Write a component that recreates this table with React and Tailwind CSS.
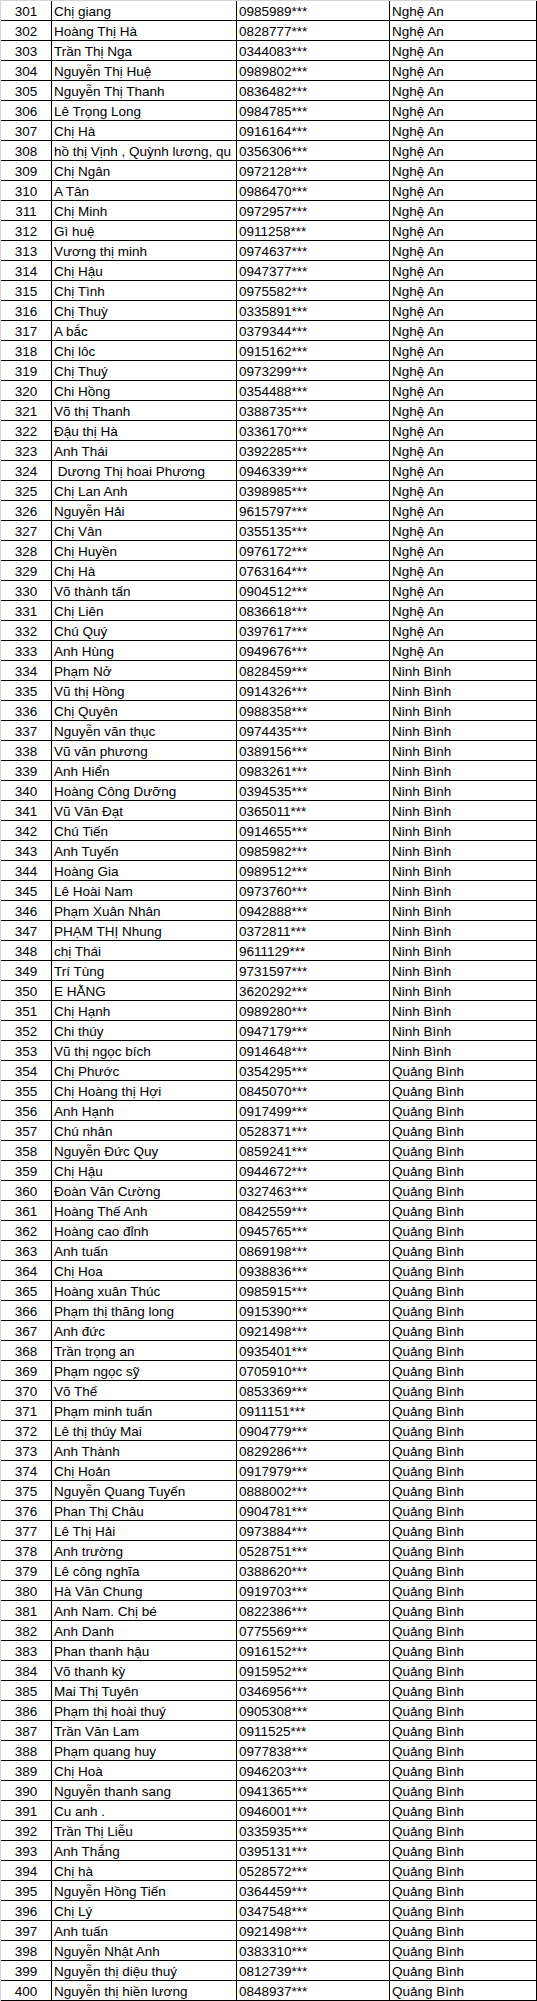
import React from "react";

const raw = `Chị giang|0985989|A
Hoàng Thị Hà|0828777|A
Trần Thị Nga|0344083|A
Nguyễn Thị Huệ|0989802|A
Nguyễn Thị Thanh|0836482|A
Lê Trọng Long|0984785|A
Chị Hà|0916164|A
hồ thị Vịnh , Quỳnh lương, qu|0356306|A
Chị Ngân|0972128|A
A Tân|0986470|A
Chị Minh|0972957|A
Gì huệ|0911258|A
Vương thị minh|0974637|A
Chị Hậu|0947377|A
Chị Tình|0975582|A
Chị Thuỳ|0335891|A
A bắc|0379344|A
Chị lôc|0915162|A
Chị Thuý|0973299|A
Chi Hồng|0354488|A
Võ thị Thanh|0388735|A
Đậu thị Hà|0336170|A
Anh Thái|0392285|A
 Dương Thị hoai Phương|0946339|A
Chị Lan Anh|0398985|A
Nguyễn Hải|9615797|A
Chị Vân|0355135|A
Chị Huyền|0976172|A
Chị Hà|0763164|A
Võ thành tấn|0904512|A
Chị Liên|0836618|A
Chú Quý|0397617|A
Anh Hùng|0949676|A
Phạm Nở|0828459|N
Vũ thị Hồng|0914326|N
Chị Quyên|0988358|N
Nguyễn văn thục|0974435|N
Vũ văn phương|0389156|N
Anh Hiển|0983261|N
Hoàng Công Dưỡng|0394535|N
Vũ Văn Đạt|0365011|N
Chú Tiến|0914655|N
Anh Tuyến|0985982|N
Hoàng Gia|0989512|N
Lê Hoài Nam|0973760|N
Phạm Xuân Nhân|0942888|N
PHẠM THỊ Nhung|0372811|N
chị Thái|9611129|N
Trí Tùng|9731597|N
E HẰNG|3620292|N
Chị Hạnh|0989280|N
Chi thúy|0947179|N
Vũ thị ngọc bích|0914648|N
Chị Phước|0354295|Q
Chị Hoàng thị Hợi|0845070|Q
Anh Hạnh|0917499|Q
Chú nhân|0528371|Q
Nguyễn Đức Quy|0859241|Q
Chị Hậu|0944672|Q
Đoàn Văn Cường|0327463|Q
Hoàng Thế Anh|0842559|Q
Hoàng cao đỉnh|0945765|Q
Anh tuấn|0869198|Q
Chị Hoa|0938836|Q
Hoàng xuân Thúc|0985915|Q
Phạm thị thăng long|0915390|Q
Anh đức|0921498|Q
Trần trọng an|0935401|Q
Phạm ngọc sỹ|0705910|Q
Võ Thế|0853369|Q
Phạm minh tuấn|0911151|Q
Lê thị thúy Mai|0904779|Q
Anh Thành|0829286|Q
Chị Hoản|0917979|Q
Nguyễn Quang Tuyến|0888002|Q
Phan Thị Châu|0904781|Q
Lê Thị Hải|0973884|Q
Anh trường|0528751|Q
Lê công nghĩa|0388620|Q
Hà Văn Chung|0919703|Q
Anh Nam. Chị bé|0822386|Q
Anh Danh|0775569|Q
Phan thanh hậu|0916152|Q
Võ thanh kỳ|0915952|Q
Mai Thị Tuyên|0346956|Q
Phạm thị hoài thuý|0905308|Q
Trần Văn Lam|0911525|Q
Phạm quang huy|0977838|Q
Chị Hoà|0946203|Q
Nguyễn thanh sang|0941365|Q
Cu anh .|0946001|Q
Trần Thị Liễu|0335935|Q
Anh Thắng|0395131|Q
Chị hà|0528572|Q
Nguyễn Hồng Tiến|0364459|Q
Chị Lý|0347548|Q
Anh tuấn|0921498|Q
Nguyễn Nhật Anh|0383310|Q
Nguyễn thị diệu thuý|0812739|Q
Nguyễn thị hiền lương|0848937|Q`;

const PROV = { A: "Nghệ An", N: "Ninh Bình", Q: "Quảng Bình" };

const rows = raw.split("\n").map((line, i) => {
  const [name, phone, p] = line.split("|");
  return { no: 301 + i, name, phone: phone + "***", prov: PROV[p] };
});

export default function App() {
  return (
    <div
      className="w-[537px] bg-white text-black border-t border-l border-[#d4d4d4] text-[13.5px] leading-[19px]"
      style={{ fontFamily: '"Liberation Sans", Arial, sans-serif' }}
    >
      {rows.map((r) => (
        <div
          key={r.no}
          className="grid grid-cols-[51px_185px_153px_147px] h-[20px] border-b border-black"
        >
          <div className="border-r border-black text-center pt-px">{r.no}</div>
          <div className="border-r border-black pl-[2px] pt-px overflow-hidden whitespace-pre">
            {r.name}
          </div>
          <div className="border-r border-black pl-[2px] pt-px whitespace-nowrap">
            {r.phone}
          </div>
          <div className="border-r border-black pl-[2px] pt-px whitespace-nowrap">
            {r.prov}
          </div>
        </div>
      ))}
    </div>
  );
}
